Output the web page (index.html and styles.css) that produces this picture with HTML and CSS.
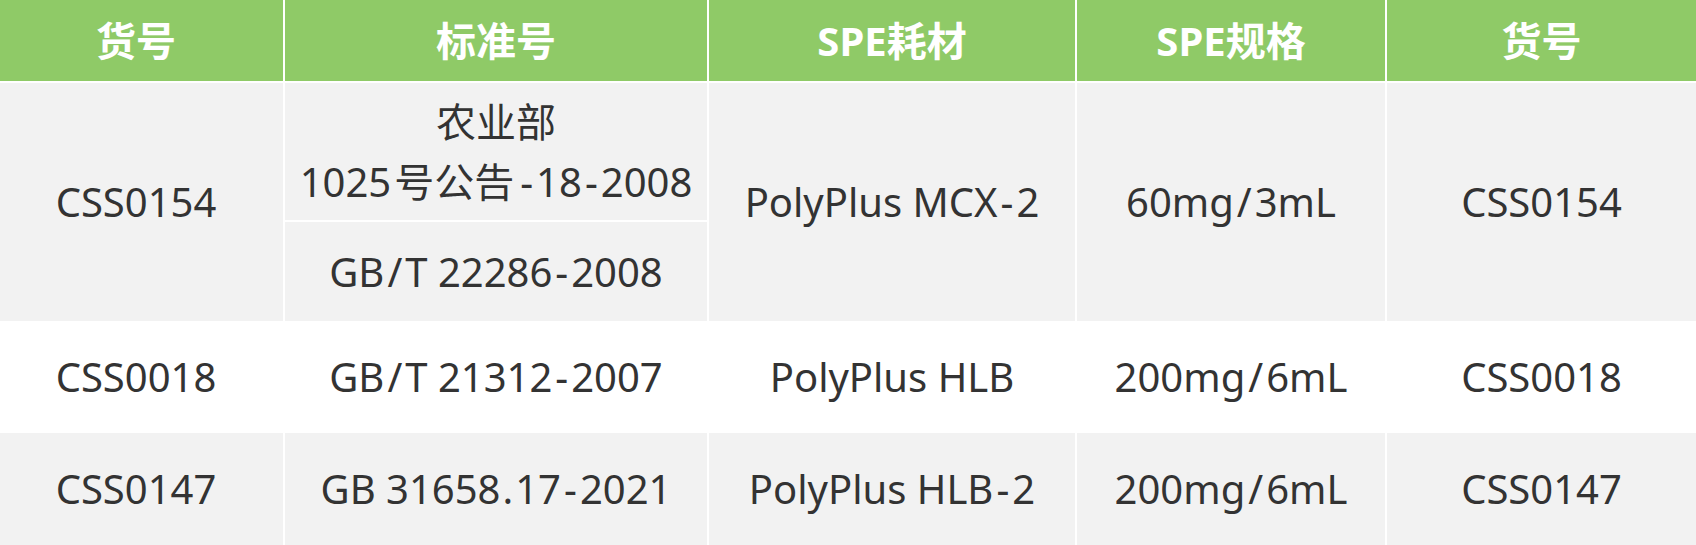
FILE: index.html
```html
<!DOCTYPE html>
<html lang="zh-CN">
<head>
<meta charset="utf-8">
<title>SPE</title>
<link rel="stylesheet" href="styles.css">
</head>
<body>
<div class="table">
  <div class="cell head c1"><span class="t">货号</span></div>
  <div class="cell head"><span class="t">标准号</span></div>
  <div class="cell head"><span class="t">SPE耗材</span></div>
  <div class="cell head"><span class="t">SPE规格</span></div>
  <div class="cell head"><span class="t">货号</span></div>

  <div class="cell gray c1 span2"><span class="t">CSS0154</span></div>
  <div class="cell gray"><span class="t">农业部<br>1025<span class="cjk">号公告</span><span class="p">-</span>18<span class="p">-</span>2008</span></div>
  <div class="cell gray span2"><span class="t">PolyPlus MCX<span class="p">-</span>2</span></div>
  <div class="cell gray span2"><span class="t">60mg<span class="p">/</span>3mL</span></div>
  <div class="cell gray span2"><span class="t">CSS0154</span></div>
  <div class="cell gray"><span class="t">GB<span class="p">/</span>T 22286<span class="p">-</span>2008</span></div>

  <div class="cell white c1"><span class="t">CSS0018</span></div>
  <div class="cell white"><span class="t">GB<span class="p">/</span>T 21312<span class="p">-</span>2007</span></div>
  <div class="cell white"><span class="t">PolyPlus HLB</span></div>
  <div class="cell white"><span class="t">200mg<span class="p">/</span>6mL</span></div>
  <div class="cell white"><span class="t">CSS0018</span></div>

  <div class="cell gray c1"><span class="t">CSS0147</span></div>
  <div class="cell gray"><span class="t">GB 31658<span class="dot">.</span>17<span class="p">-</span>2021</span></div>
  <div class="cell gray"><span class="t">PolyPlus HLB<span class="p">-</span>2</span></div>
  <div class="cell gray"><span class="t">200mg<span class="p">/</span>6mL</span></div>
  <div class="cell gray"><span class="t">CSS0147</span></div>
</div>
</body>
</html>
```

FILE: styles.css
```css
html, body {
  margin: 0;
  padding: 0;
  background: #ffffff;
}

.table {
  display: grid;
  grid-template-columns: 283px 422px 366px 308px 1fr;
  grid-template-rows: 81px 137px 99px 108px 112px;
  gap: 2px;
  background: #ffffff;
  font-family: "Noto Sans", "Noto Sans CJK SC", sans-serif;
  font-size: 40px;
  line-height: 60px;
  color: #333333;
}

.cell {
  display: flex;
  align-items: center;
  justify-content: center;
  text-align: center;
}

.t {
  display: block;
  white-space: nowrap;
}

.t .p {
  padding: 0 3px;
}

.t .dot {
  padding: 0 2px;
}

.t .cjk {
  padding: 0 3px;
}

.c1 {
  padding-right: 11px;
}

.head {
  background: #8fca67;
  color: #ffffff;
  font-weight: 700;
}

.gray {
  background: #f2f2f2;
}

.white {
  background: #ffffff;
}

.span2 {
  grid-row: span 2;
}
```
